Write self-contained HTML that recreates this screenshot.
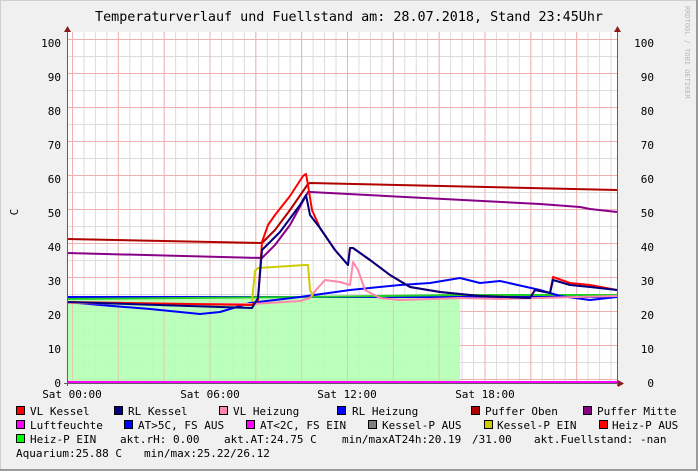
<!DOCTYPE html><html><head><meta charset="utf-8"><style>
html,body{margin:0;padding:0;background:#f0f0f0}
svg{display:block}
text{font-family:"DejaVu Sans Mono","Liberation Mono",monospace;font-size:11px;fill:#000}
</style></head><body>
<svg width="698" height="471" viewBox="0 0 698 471" xmlns="http://www.w3.org/2000/svg">
<defs>
<pattern id="hmin" x="0" y="5" width="10" height="17" patternUnits="userSpaceOnUse"><line x1="0" y1="0.5" x2="10" y2="0.5" stroke="#dcdcdc" stroke-width="1"/></pattern>
<pattern id="hmaj" x="0" y="5" width="10" height="34" patternUnits="userSpaceOnUse"><line x1="0" y1="0.5" x2="10" y2="0.5" stroke="#f0b0b0" stroke-width="1"/></pattern>
<pattern id="vmin" x="72" y="0" width="11.458" height="10" patternUnits="userSpaceOnUse"><line x1="0.5" y1="0" x2="0.5" y2="10" stroke="#dcdcdc" stroke-width="1"/></pattern>
<pattern id="vmaj" x="72" y="0" width="45.83" height="10" patternUnits="userSpaceOnUse"><line x1="0.5" y1="0" x2="0.5" y2="10" stroke="#f0b0b0" stroke-width="1"/></pattern>
</defs>
<rect x="0" y="0" width="698" height="471" fill="#f0f0f0"/>
<rect x="0.5" y="0.5" width="697" height="470" fill="none" stroke="#cfcfcf"/>
<line x1="697" y1="0" x2="697" y2="471" stroke="#9a9a9a" stroke-width="2"/>
<line x1="0" y1="470" x2="698" y2="470" stroke="#9a9a9a" stroke-width="2"/>
<text x="349" y="21" text-anchor="middle" style="font-size:13.4px">Temperaturverlauf und Fuellstand am: 28.07.2018, Stand 23:45Uhr</text>
<text transform="translate(685,6) rotate(90)" style="font-size:7px;fill:#b8b8b8">RRDTOOL / TOBI OETIKER</text>
<text transform="translate(18,212) rotate(-90)" text-anchor="middle">C</text>
<rect x="67" y="32" width="550" height="351" fill="#fff"/>
<rect x="67" y="32" width="550" height="351" fill="url(#hmin)"/>
<rect x="67" y="32" width="550" height="351" fill="url(#vmin)"/>
<rect x="67" y="32" width="550" height="351" fill="url(#hmaj)"/>
<rect x="67" y="32" width="550" height="351" fill="url(#vmaj)"/>
<rect x="67" y="297" width="393" height="86" fill="#b3ffb3" opacity="0.9"/>
<rect x="67" y="297" width="393" height="86" fill="url(#vmaj)" opacity="0.6"/>
<g fill="none" stroke-linejoin="round" stroke-width="2">
<polyline stroke="#0000ff" points="67,297 617,297"/>
<polyline stroke="#22cc22" points="67,299 300,297 460,295 617,295"/>
<polyline stroke="#0000ff" points="67,302 100,305 150,309 200,314 220,312 250,303 300,297 350,290 400,285 430,283 460,278 480,283 500,281 540,290 560,296 590,300 617,297"/>
<polyline stroke="#ff88aa" points="67,303 200,304 252,304 300,301 310,298 316,290 325,280 340,282 350,285 353,262 358,270 365,290 380,298 400,300 460,298 500,299 617,296"/>
<polyline stroke="#cccc00" points="252,301 255,271 258,268 305,265 308,265 310,290 313,296"/>
<polyline stroke="#b00000" points="67,239 262,243 275,230 290,210 308,184 310,183 617,190"/>
<polyline stroke="#880088" points="67,253 262,258 275,245 290,225 308,192 310,192 540,204 580,207 590,209 617,212"/>
<polyline stroke="#ff0000" points="67,302 252,305 258,300 262,242 268,225 275,215 290,196 303,176 306,174 308,185 312,210 320,228 335,250 348,265 350,248 353,248 370,260 390,275 410,287 440,292 480,296 530,298 535,290 550,293 553,277 570,283 590,285 617,290"/>
<polyline stroke="#000080" points="67,302 252,308 258,298 262,250 280,232 300,205 306,195 310,215 320,228 335,250 348,265 350,248 353,248 370,260 390,275 410,287 440,292 480,296 530,298 535,290 550,293 553,280 570,285 590,287 617,290"/>
<polyline stroke="#ff00ff" points="67,382 617,382"/>
</g>
<line x1="67.5" y1="30" x2="67.5" y2="386" stroke="#606060"/>
<line x1="617.5" y1="30" x2="617.5" y2="386" stroke="#606060"/>
<line x1="64" y1="383.5" x2="622" y2="383.5" stroke="#606060"/>
<polygon points="64,32 71,32 67.5,26" fill="#8b1a1a"/>
<polygon points="614,32 621,32 617.5,26" fill="#8b1a1a"/>
<polygon points="618,380 618,387 624,383.5" fill="#8b1a1a"/>
<g text-anchor="end">
<text x="61" y="47">100</text><text x="61" y="81">90</text><text x="61" y="115">80</text><text x="61" y="149">70</text><text x="61" y="183">60</text><text x="61" y="217">50</text><text x="61" y="251">40</text><text x="61" y="285">30</text><text x="61" y="319">20</text><text x="61" y="353">10</text><text x="61" y="387">0</text>
<text x="654" y="47">100</text><text x="654" y="81">90</text><text x="654" y="115">80</text><text x="654" y="149">70</text><text x="654" y="183">60</text><text x="654" y="217">50</text><text x="654" y="251">40</text><text x="654" y="285">30</text><text x="654" y="319">20</text><text x="654" y="353">10</text><text x="654" y="387">0</text>
</g>
<g text-anchor="middle">
<text x="72" y="398">Sat 00:00</text><text x="210" y="398">Sat 06:00</text><text x="347" y="398">Sat 12:00</text><text x="485" y="398">Sat 18:00</text>
</g>
<g stroke="#000" stroke-width="1">
<rect x="16.5" y="406.5" width="8" height="8" fill="#ff0000"/>
<rect x="114.5" y="406.5" width="8" height="8" fill="#000080"/>
<rect x="219.5" y="406.5" width="8" height="8" fill="#ff88aa"/>
<rect x="337.5" y="406.5" width="8" height="8" fill="#0000ff"/>
<rect x="471.5" y="406.5" width="8" height="8" fill="#b00000"/>
<rect x="583.5" y="406.5" width="8" height="8" fill="#880088"/>
<rect x="16.5" y="420.5" width="8" height="8" fill="#ff00ff"/>
<rect x="124.5" y="420.5" width="8" height="8" fill="#0000ff"/>
<rect x="246.5" y="420.5" width="8" height="8" fill="#ff00ff"/>
<rect x="368.5" y="420.5" width="8" height="8" fill="#808080"/>
<rect x="484.5" y="420.5" width="8" height="8" fill="#cccc00"/>
<rect x="599.5" y="420.5" width="8" height="8" fill="#ff0000"/>
<rect x="16.5" y="434.5" width="8" height="8" fill="#00ff00"/>
</g>
<text x="30" y="415">VL Kessel</text>
<text x="128" y="415">RL Kessel</text>
<text x="233" y="415">VL Heizung</text>
<text x="352" y="415">RL Heizung</text>
<text x="485" y="415">Puffer Oben</text>
<text x="597" y="415">Puffer Mitte</text>
<text x="30" y="429">Luftfeuchte</text>
<text x="138" y="429">AT&gt;5C, FS AUS</text>
<text x="260" y="429">AT&lt;2C, FS EIN</text>
<text x="382" y="429">Kessel-P AUS</text>
<text x="497" y="429">Kessel-P EIN</text>
<text x="612" y="429">Heiz-P AUS</text>
<text x="30" y="443">Heiz-P EIN</text>
<text x="120" y="443">akt.rH: 0.00</text>
<text x="224" y="443">akt.AT:24.75 C</text>
<text x="342" y="443">min/maxAT24h:20.19</text>
<text x="472" y="443">/31.00</text>
<text x="534" y="443">akt.Fuellstand: -nan</text>
<text x="16" y="457">Aquarium:25.88 C</text>
<text x="144" y="457">min/max:25.22/26.12</text>
</svg>
</body></html>
